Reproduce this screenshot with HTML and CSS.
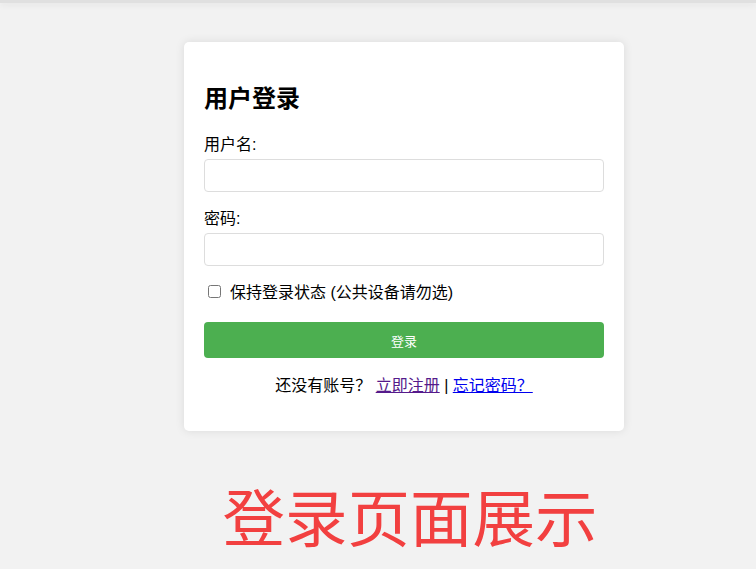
FILE: index.html
```html
<!DOCTYPE html>
<html lang="zh-CN">
<head>
    <meta charset="UTF-8">
    <meta name="viewport" content="width=device-width, initial-scale=1.0">
    <title>用户登录</title>
    <link rel="stylesheet" href="styles.css">
</head>
<body>
    <div class="top-edge"></div>
    <div class="page">
        <div class="login-container">
            <h2>用户登录</h2>
            <form id="loginForm">
                <div class="form-group">
                    <label for="username">用户名:</label>
                    <input type="text" id="username" name="username">
                </div>
                <div class="form-group">
                    <label for="password">密码:</label>
                    <input type="password" id="password" name="password">
                </div>
                <div class="remember">
                    <input type="checkbox" id="remember" name="remember">
                    <label for="remember">保持登录状态 (公共设备请勿选)</label>
                </div>
                <button type="submit">登录</button>
            </form>
            <div class="links">
                还没有账号？ <a href="#" class="visited">立即注册</a> | <a href="#">忘记密码？ </a>
            </div>
        </div>
        <div class="caption">登录页面展示</div>
    </div>
</body>
</html>
```

FILE: styles.css
```css
body {
    font-family: "Liberation Sans", Arial, "Noto Sans CJK SC", sans-serif;
    margin: 0;
    background-color: #f2f2f2;
    color: #000;
}

.top-edge {
    height: 3px;
    background-color: #e0e0e0;
    box-shadow: 0 2px 6px rgba(0, 0, 0, 0.08);
}

.page {
    padding-left: 184px;
}

.login-container {
    width: 400px;
    margin-top: 39px;
    padding: 20px 20px 35px;
    background-color: #fff;
    border-radius: 5px;
    box-shadow: 0 0 10px rgba(0, 0, 0, 0.1);
}

.login-container h2 {
    font-size: 24px;
    margin: 17px 0 17px;
}

.form-group {
    margin-bottom: 13px;
}

.form-group label {
    display: block;
    font-size: 16px;
    margin-bottom: 4px;
}

.form-group input {
    display: block;
    box-sizing: border-box;
    width: 100%;
    height: 33px;
    padding: 6px 8px;
    border: 1px solid #ddd;
    border-radius: 4px;
    font-size: 14px;
}

.remember {
    display: flex;
    align-items: center;
    font-size: 16px;
    margin: 13px 0 19px;
}

.remember input {
    width: 13px;
    height: 13px;
    margin: 0 9px 0 4px;
}

button {
    display: block;
    width: 100%;
    height: 36px;
    border: none;
    border-radius: 4px;
    background-color: #4CAF50;
    color: white;
    font-family: inherit;
    font-size: 13px;
    cursor: pointer;
}

.links {
    text-align: center;
    font-size: 16px;
    margin-top: 14px;
}

.links a {
    color: #0000ee;
}

.links a.visited {
    color: #551a8b;
}

.caption {
    width: 440px;
    margin-top: 38px;
    padding-left: 6px;
    text-align: center;
    font-size: 62.5px;
    color: #f24040;
    white-space: nowrap;
}
```
